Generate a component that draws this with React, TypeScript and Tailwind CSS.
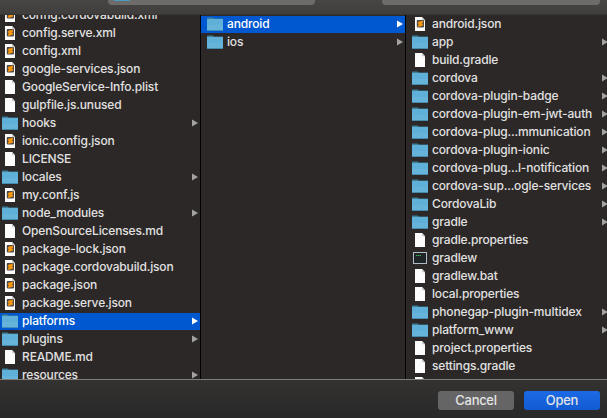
import React from "react";

type Kind = "code" | "folder" | "doc" | "term";
type Item = { name: string; kind: Kind; selected?: boolean };

const left: Item[] = [
  { name: "config.cordovabuild.xml", kind: "code" },
  { name: "config.serve.xml", kind: "code" },
  { name: "config.xml", kind: "code" },
  { name: "google-services.json", kind: "code" },
  { name: "GoogleService-Info.plist", kind: "doc" },
  { name: "gulpfile.js.unused", kind: "doc" },
  { name: "hooks", kind: "folder" },
  { name: "ionic.config.json", kind: "code" },
  { name: "LICENSE", kind: "doc" },
  { name: "locales", kind: "folder" },
  { name: "my.conf.js", kind: "code" },
  { name: "node_modules", kind: "folder" },
  { name: "OpenSourceLicenses.md", kind: "doc" },
  { name: "package-lock.json", kind: "code" },
  { name: "package.cordovabuild.json", kind: "code" },
  { name: "package.json", kind: "code" },
  { name: "package.serve.json", kind: "code" },
  { name: "platforms", kind: "folder", selected: true },
  { name: "plugins", kind: "folder" },
  { name: "README.md", kind: "doc" },
  { name: "resources", kind: "folder" },
];

const middle: Item[] = [
  { name: "android", kind: "folder", selected: true },
  { name: "ios", kind: "folder" },
];

const right: Item[] = [
  { name: "android.json", kind: "code" },
  { name: "app", kind: "folder" },
  { name: "build.gradle", kind: "doc" },
  { name: "cordova", kind: "folder" },
  { name: "cordova-plugin-badge", kind: "folder" },
  { name: "cordova-plugin-em-jwt-auth", kind: "folder" },
  { name: "cordova-plug...mmunication", kind: "folder" },
  { name: "cordova-plugin-ionic", kind: "folder" },
  { name: "cordova-plug...l-notification", kind: "folder" },
  { name: "cordova-sup...ogle-services", kind: "folder" },
  { name: "CordovaLib", kind: "folder" },
  { name: "gradle", kind: "folder" },
  { name: "gradle.properties", kind: "doc" },
  { name: "gradlew", kind: "term" },
  { name: "gradlew.bat", kind: "doc" },
  { name: "local.properties", kind: "doc" },
  { name: "phonegap-plugin-multidex", kind: "folder" },
  { name: "platform_www", kind: "folder" },
  { name: "project.properties", kind: "doc" },
  { name: "settings.gradle", kind: "doc" },
  { name: "wrapper.gradle", kind: "doc" },
];

function Icon({ kind }: { kind: Kind }) {
  if (kind === "folder")
    return (
      <svg width="16" height="14" viewBox="0 0 16 14" className="mt-px block shrink-0">
        <path d="M0 1Q0 .4.7.4H5.6L7 1.6H16V13H0Z" fill="#3d819f" />
        <path d="M0 2.4H16V13.6H0Z" fill="#5eb0d8" />
        <path d="M0 2.4H16V3.2H0Z" fill="#6dbade" />
        <path d="M0 8H16V13H0Z" fill="#67b4da" />
        <path d="M0 13H16V13.8H0Z" fill="#4590b6" />
      </svg>
    );
  if (kind === "term")
    return (
      <svg width="16" height="14" viewBox="0 0 16 14" className="mt-px block shrink-0">
        <rect x="1" y="1" width="14" height="12" fill="#b0bcc8" />
        <rect x="2" y="2" width="12" height="10" fill="#1f2426" />
        <path d="M4 4.5H9" stroke="#3fae50" strokeWidth="1" strokeDasharray="1.4 .4" />
      </svg>
    );
  return (
    <svg width="16" height="14" viewBox="0 0 16 14" className="mt-px block shrink-0">
      <path d="M3 0H10L13 3.2V14H3Z" fill="#fcfcfc" />
      <path d="M10 0L13 3.2H10Z" fill="#cfcfcf" />
      {kind === "code" && (
        <>
          <rect x="4.8" y="3" width="7.2" height="7.4" rx=".8" fill="#484646" />
          <path d="M6.2 4.9L10.8 3.8V5.8L9.2 6.4L10.8 6.9V8.6L6.2 9.7V7.8L7.8 7.2L6.2 6.7Z" fill="#ff9a0a" stroke="#e58a14" strokeWidth=".5" />
        </>
      )}
    </svg>
  );
}

function Row({ item }: { item: Item }) {
  return (
    <div
      className={`mt-px flex h-[17px] shrink-0 items-start pr-[2px] ${
        item.selected ? "bg-[#0058d0] text-white" : "text-[#e2e1e1]"
      }`}
    >
      <Icon kind={item.kind} />
      <span className="ml-1 min-w-0 flex-1 whitespace-nowrap">{item.name}</span>
      {item.kind === "folder" && (
        <svg width="6" height="8" viewBox="0 0 6 8" className="mt-1 shrink-0">
          <path d="M0 .4L6 4L0 7.6Z" fill={item.selected ? "#ffffff" : "#a4a2a2"} />
        </svg>
      )}
    </div>
  );
}

export default function App() {
  return (
    <div className="flex h-[418px] w-[607px] flex-col overflow-hidden bg-[#2b2827] font-['Inter','Liberation_Sans',sans-serif] text-[12px] font-medium leading-[15px] tracking-[-0.15px]">
      <header className="flex h-[15px] shrink-0 items-start border-b border-[#373635] bg-linear-to-b from-[#474645] to-[#3f3e3d] pl-[108px]">
        <div className="h-[5px] w-[207px] rounded-b-[4px] bg-[#6d6c6b] pl-1.5">
          <div className="h-px w-4 bg-[#4c9abf]" />
        </div>
        <div className="ml-[67px] h-[5px] w-[218px] rounded-b-[4px] bg-[#6d6c6b]" />
      </header>
      <main className="flex h-[364px] shrink-0 overflow-hidden">
        <section className="flex h-full w-[201px] shrink-0 flex-col overflow-hidden border-r border-black">
          <div className="-mt-[9px] flex flex-col *:pl-[2px]">
            {left.map((i) => <Row key={i.name} item={i} />)}
          </div>
        </section>
        <section className="flex h-full w-[205px] shrink-0 flex-col overflow-hidden border-r border-black *:pl-[6px]">
          {middle.map((i) => <Row key={i.name} item={i} />)}
        </section>
        <section className="flex h-full w-[204px] shrink-0 flex-col overflow-hidden *:pl-[6px]">
          {right.map((i) => <Row key={i.name} item={i} />)}
        </section>
      </main>
      <footer className="flex h-[39px] shrink-0 items-start justify-end gap-2.5 border-t border-[#817e75] bg-linear-to-b from-[#333231] to-[#2a2929] pr-[7px] pt-[11px] text-[13px] tracking-[-0.3px] text-[#e4e4e4]">
        <button className="h-[19px] w-[76px] rounded-[3px] bg-[#666565] leading-[19px]">Cancel</button>
        <button className="h-[19px] w-[76px] rounded-[3px] bg-linear-to-b from-[#1c6ae6] to-[#125bd2] leading-[19px]">Open</button>
      </footer>
    </div>
  );
}
